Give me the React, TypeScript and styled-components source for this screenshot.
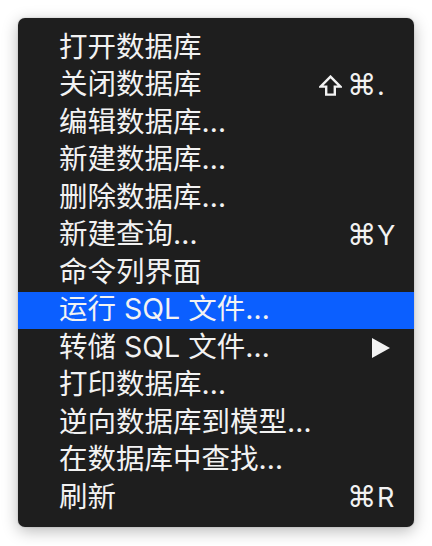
import React from "react";
import styled, { createGlobalStyle } from "styled-components";

const GlobalStyle = createGlobalStyle`
  html, body {
    margin: 0;
    padding: 0;
    background: #ffffff;
  }
`;

interface MenuEntry {
  label: string;
  keyChar?: string;
  shift?: boolean;
  submenu?: boolean;
  active?: boolean;
}

const entries: MenuEntry[] = [
  { label: "打开数据库" },
  { label: "关闭数据库", shift: true, keyChar: "." },
  { label: "编辑数据库…" },
  { label: "新建数据库…" },
  { label: "删除数据库…" },
  { label: "新建查询…", keyChar: "Y" },
  { label: "命令列界面" },
  { label: "运行 SQL 文件…", active: true },
  { label: "转储 SQL 文件…", submenu: true },
  { label: "打印数据库…" },
  { label: "逆向数据库到模型…" },
  { label: "在数据库中查找…" },
  { label: "刷新", keyChar: "R" },
];

const Page = styled.div`
  padding: 18px;
`;

const Menu = styled.div`
  width: 396px;
  box-sizing: border-box;
  padding: 11px 0 10px;
  background: #1e1e1e;
  border-radius: 7px;
  box-shadow: 0 4px 16px rgba(0, 0, 0, 0.28), 0 0 2px rgba(0, 0, 0, 0.2);
  overflow: hidden;
`;

const Row = styled.div<{ $active?: boolean }>`
  height: 37.5px;
  display: flex;
  align-items: center;
  justify-content: space-between;
  padding: 0 19px 0 41px;
  background: ${(p) => (p.$active ? "#0b5fff" : "transparent")};
  color: #f2f2f2;
  font-family: "Inter", "Noto Sans CJK SC", sans-serif;
  font-size: 28.5px;
  line-height: 1;
`;

const Label = styled.span`
  white-space: nowrap;
  margin-top: -2px;
`;

const Shortcut = styled.span`
  display: flex;
  align-items: center;
  white-space: nowrap;
`;

const Command = styled.span`
  font-family: "DejaVu Sans", sans-serif;
  font-size: 29px;
`;

const Key = styled.span`
  width: 18px;
  margin-left: 1px;
  font-family: "Inter", sans-serif;
  font-size: 27px;
  text-align: left;
`;

const ShiftSvg = styled.svg`
  flex-shrink: 0;
  margin-right: 5px;
`;

const ShiftIcon = () => (
  <ShiftSvg width="23" height="21" viewBox="0 0 23 21">
    <path
      d="M11.5 1.6 L21.4 11.6 L15.8 11.6 L15.8 19.6 L7.2 19.6 L7.2 11.6 L1.6 11.6 Z"
      fill="none"
      stroke="#f2f2f2"
      strokeWidth="2.4"
      strokeLinejoin="miter"
    />
  </ShiftSvg>
);

const SubmenuArrow = styled.svg`
  flex-shrink: 0;
  margin-right: 5px;
`;

const Arrow = () => (
  <SubmenuArrow width="18" height="20" viewBox="0 0 18 20">
    <path d="M0 0 L18 10 L0 20 Z" fill="#f2f2f2" />
  </SubmenuArrow>
);

export default function App() {
  return (
    <Page>
      <GlobalStyle />
      <Menu>
        {entries.map((e) => (
          <Row key={e.label} $active={e.active}>
            <Label>{e.label}</Label>
            {e.keyChar && (
              <Shortcut>
                {e.shift && <ShiftIcon />}
                <Command>⌘</Command>
                <Key>{e.keyChar}</Key>
              </Shortcut>
            )}
            {e.submenu && <Arrow />}
          </Row>
        ))}
      </Menu>
    </Page>
  );
}
